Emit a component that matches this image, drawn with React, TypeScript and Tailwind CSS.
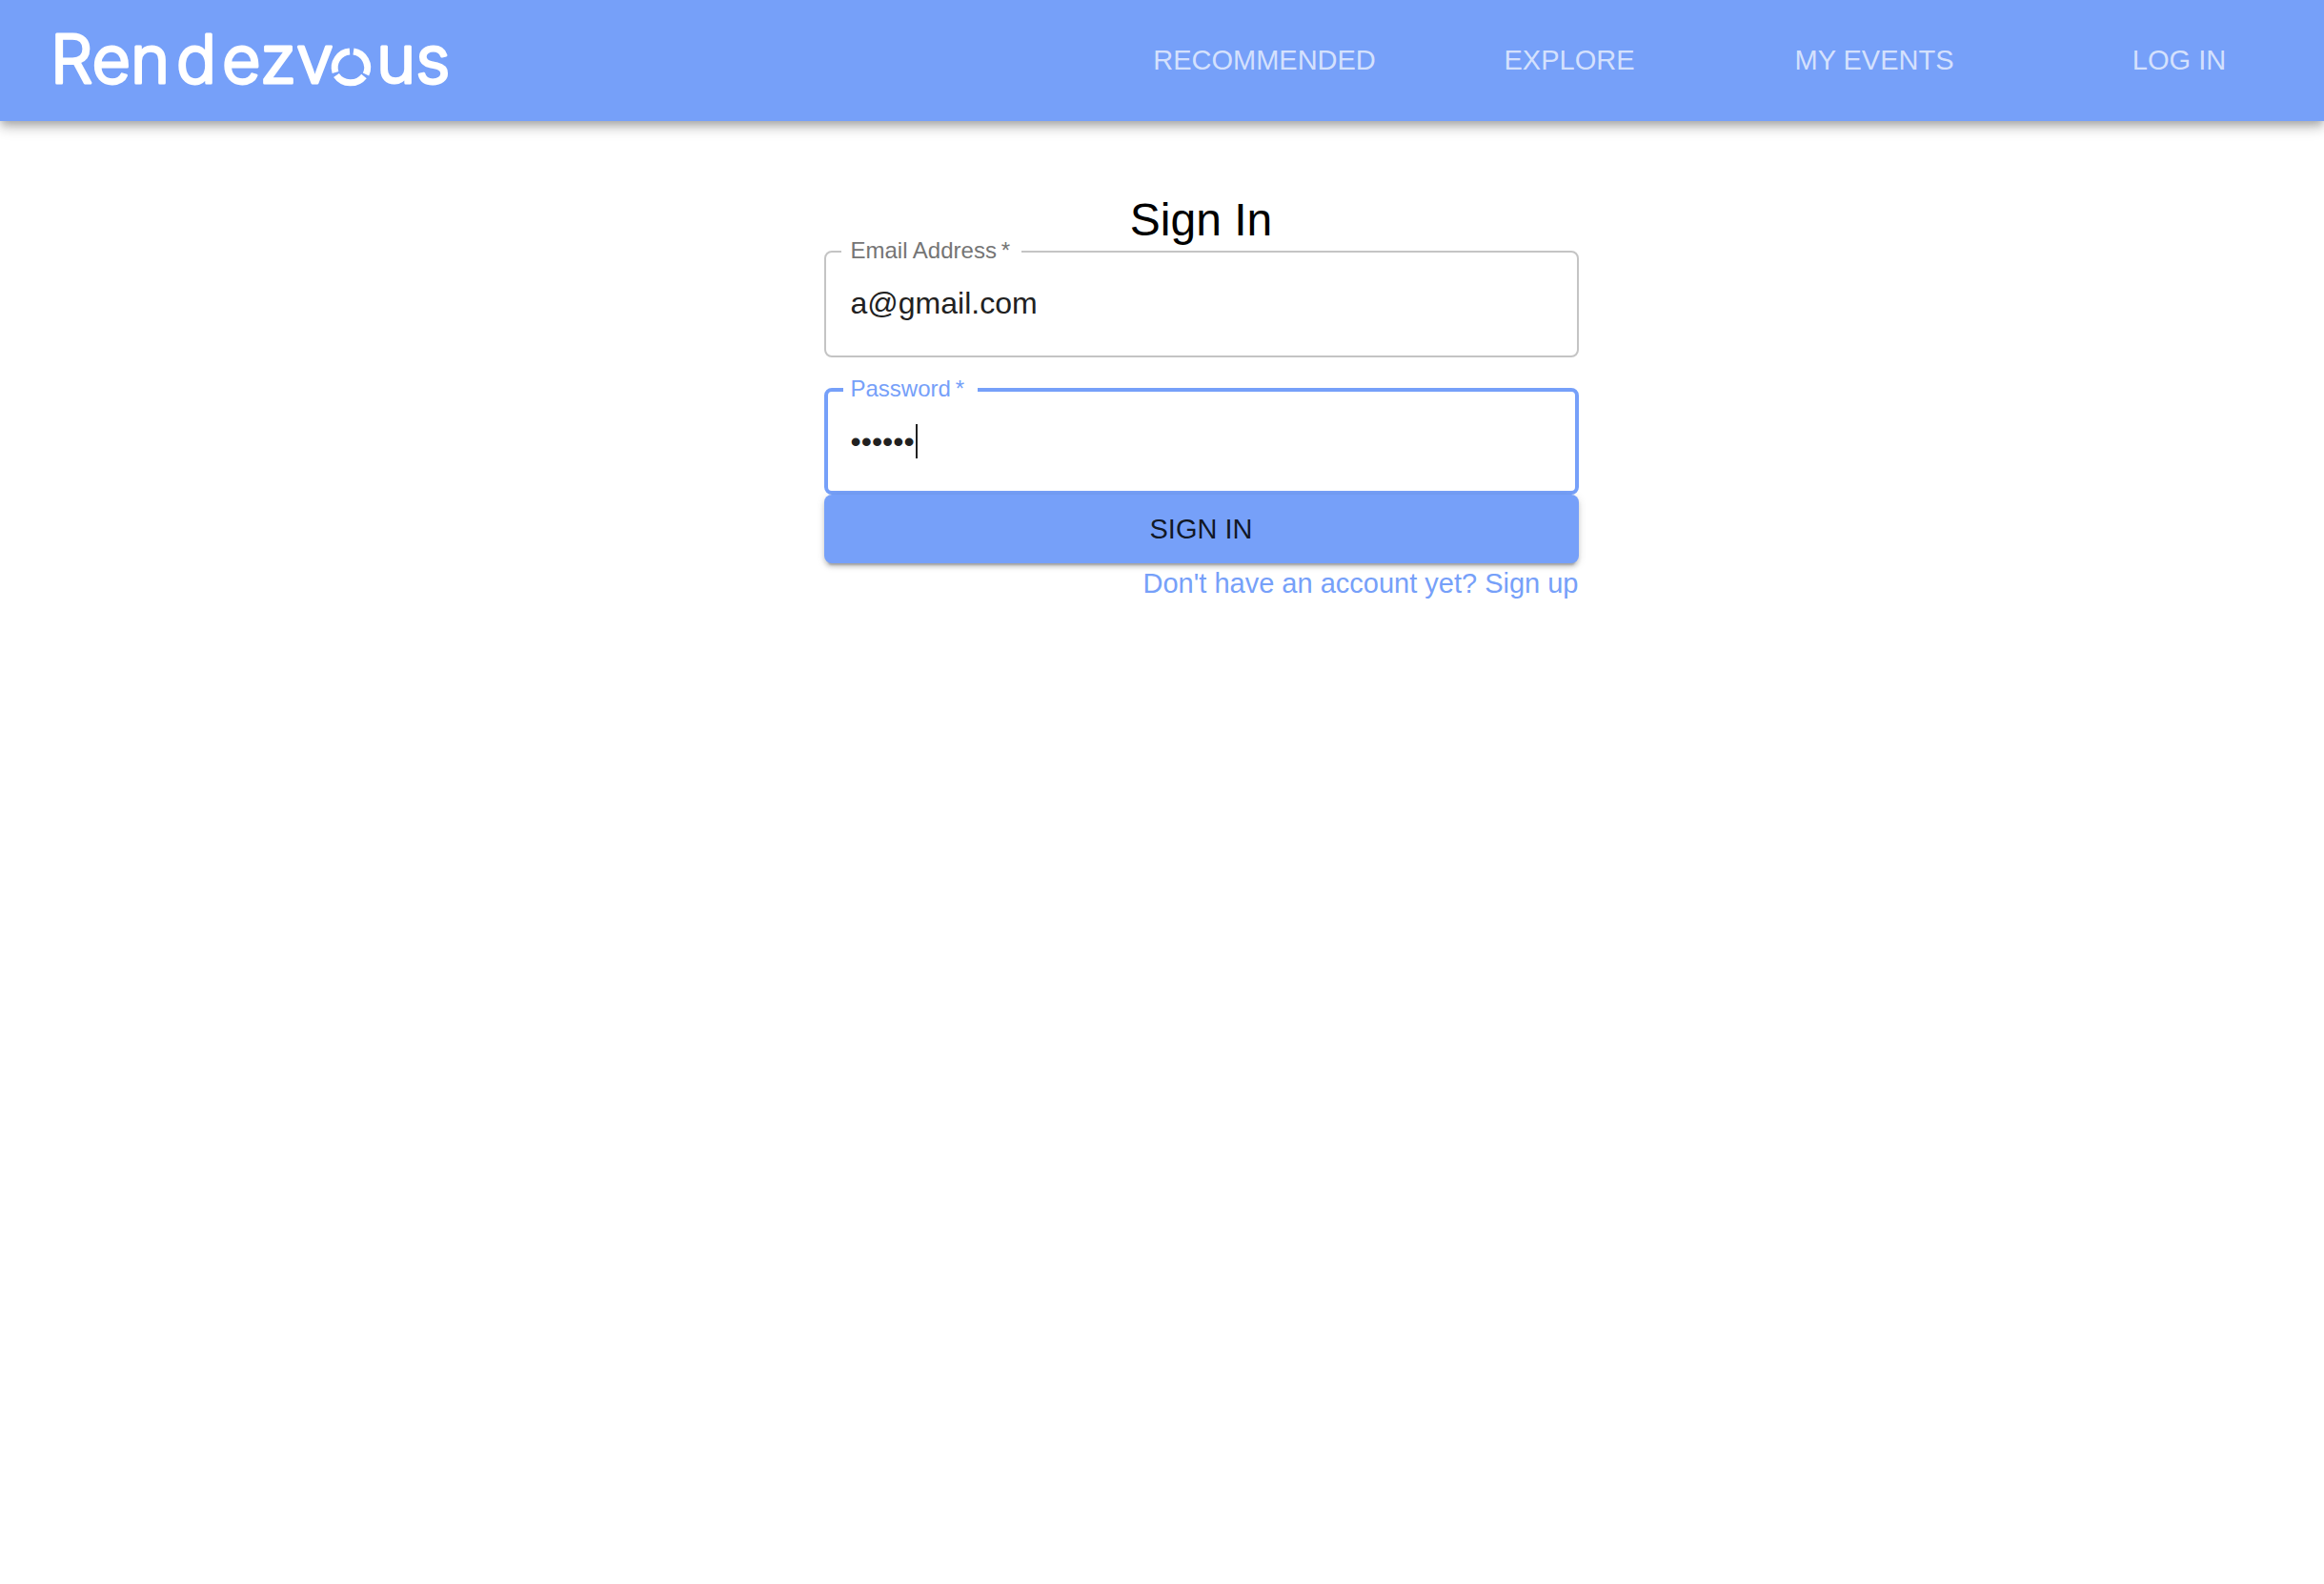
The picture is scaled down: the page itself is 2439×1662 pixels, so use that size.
const tabs = ["Recommended", "Explore", "My Events", "Log In"];

function Logo() {
  return (
    <svg
      width="428"
      height="112"
      viewBox="-8 0 428 112"
      role="img"
      aria-label="Rendezvous"
      className="shrink-0 fill-white stroke-white font-['Inter'] text-[70px] font-light"
      strokeLinejoin="round"
      strokeLinecap="round"
      strokeWidth="3"
    >
      <text x="-3" y="79">
        Ren
      </text>
      <text x="129" y="79">
        d
      </text>
      <text x="177" y="79">
        e
      </text>
      <text x="217" y="79">
        zv
      </text>
      <g fill="none" strokeWidth="7" strokeLinecap="butt">
        <path d="M311 46 A17 17 0 0 0 296 68" />
        <path d="M315 46 A17 17 0 0 1 328 70" />
        <path d="M297 71 A18 18 0 0 0 326 72" />
      </g>
      <text x="339" y="79">
        us
      </text>
    </svg>
  );
}

export default function App() {
  return (
    <div className="min-h-screen overflow-x-hidden bg-white font-['Liberation_Sans',sans-serif]">
      <header className="flex h-[127px] items-center bg-[#76a0f9] pl-12 shadow-[0_4px_8px_-2px_rgba(0,0,0,0.2),0_8px_10px_0_rgba(0,0,0,0.14),0_2px_20px_0_rgba(0,0,0,0.12)]">
        <Logo />
        <nav className="-mr-2 ml-auto flex">
          {tabs.map((tab) => (
            <a
              key={tab}
              href="#"
              className="flex h-24 w-80 items-center justify-center text-[29px] text-white/70 uppercase"
            >
              {tab}
            </a>
          ))}
        </nav>
      </header>

      <main className="flex justify-center pt-[76px] pl-[82px]">
        <form className="flex w-full max-w-[792px] flex-col">
          <h1 className="h-[49px] text-center text-[48px] leading-14 text-black">Sign In</h1>

          <fieldset className="rounded-lg border-2 border-[#c4c4c4] px-[26px] pb-[37px]">
            <legend className="-ml-2.5 h-6 pr-3 pl-2.5 text-2xl leading-[22px] text-[#757575]">
              <label htmlFor="email">Email Address&thinsp;*</label>
            </legend>
            <input
              id="email"
              type="email"
              required
              defaultValue="a@gmail.com"
              className="mt-6 block h-9 w-full bg-transparent text-[32px] leading-9 text-[#212121] outline-none"
            />
          </fieldset>

          <fieldset className="mt-[22px] rounded-lg border-4 border-[#76a0f9] px-6 pb-[34px]">
            <legend className="-ml-2 h-6 pr-3.5 pl-2 text-2xl leading-[22px] text-[#76a0f9]">
              <label htmlFor="password">Password&thinsp;*</label>
            </legend>
            <div className="relative mt-6">
              <input
                id="password"
                type="password"
                required
                defaultValue="secret"
                className="block h-9 w-full bg-transparent text-[32px] leading-9 text-[#212121] caret-transparent outline-none"
              />
              <span className="absolute top-0 left-[68px] h-9 w-0.5 bg-[#212121]" />
            </div>
          </fieldset>

          <button
            type="submit"
            className="h-[72px] rounded-lg bg-[#76a0f9] pt-0.5 text-[29px] text-black/87 uppercase shadow-[0_6px_2px_-4px_rgba(0,0,0,0.2),0_4px_4px_0_rgba(0,0,0,0.14),0_2px_10px_0_rgba(0,0,0,0.12)]"
          >
            Sign In
          </button>
          <a href="#" className="self-end text-[29px] leading-[42px] text-[#76a0f9]">
            Don't have an account yet? Sign up
          </a>
        </form>
      </main>
    </div>
  );
}
